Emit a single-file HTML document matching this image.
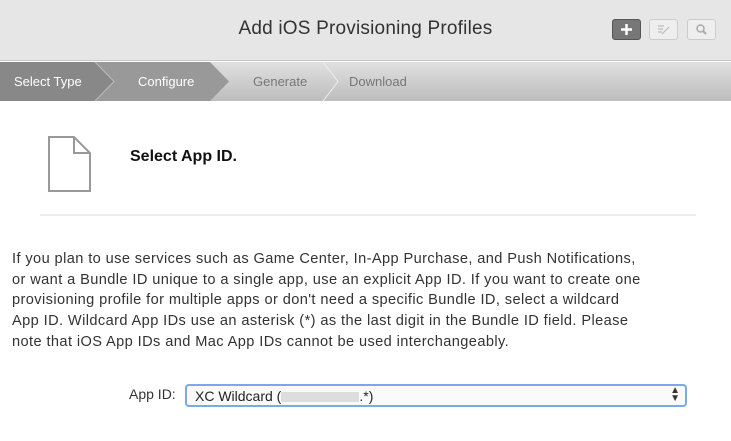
<!DOCTYPE html>
<html><head><style>
body{margin:0;width:731px;height:441px;overflow:hidden;background:#fff;font-family:"Liberation Sans",sans-serif;position:relative}
.hdr{position:absolute;left:0;top:0;width:731px;height:60px;background:#e6e6e6;border-bottom:1px solid #c8c8c8}
.title{position:absolute;left:0;width:731px;top:18px;text-align:center;font-size:19px;color:#333;letter-spacing:0.2px}
.btn{position:absolute;top:19px;width:29px;height:21px;border:1px solid #ccc;border-radius:3px;background:#eee;box-sizing:border-box}
.crumb{position:absolute;left:0;top:62px;width:731px;height:39px;background:linear-gradient(#e0e0e0,#bdbdbd)}
.c{position:absolute;top:12px;font-size:13px}
</style></head><body>
<div class="hdr">
<div class="title">Add iOS Provisioning Profiles</div>
<div class="btn" style="left:612px;background:#777;border-color:#555"><svg width="27" height="19"><path d="M13.5 4v11M8 9.5h11" stroke="#fff" stroke-width="2.5"/></svg></div>
<div class="btn" style="left:649px"><svg width="27" height="19"><path d="M8 6h6M8 9h5M8 12h4M12 14l7-7" stroke="#bbb" stroke-width="1.2" fill="none"/></svg></div>
<div class="btn" style="left:687px"><svg width="27" height="19"><circle cx="12.5" cy="8.5" r="3.5" stroke="#aaa" stroke-width="1.5" fill="none"/><path d="M15 11l3 3" stroke="#aaa" stroke-width="2"/></svg></div>
</div>
<div class="crumb">
<svg width="731" height="39" style="position:absolute;left:0;top:0">
<polygon points="0,0 210,0 229,19.5 210,39 0,39" fill="#999"/>
<polygon points="0,0 95,0 114,19.5 95,39 0,39" fill="#888"/>
<polyline points="95,0 114,19.5 95,39" fill="none" stroke="#bbb"/>
<polyline points="323,0 338,19.5 323,39" fill="none" stroke="#eee"/>
</svg>
<div class="c" style="left:14px;color:#fff">Select Type</div>
<div class="c" style="left:138px;color:#fff">Configure</div>
<div class="c" style="left:253px;color:#777">Generate</div>
<div class="c" style="left:349px;color:#777">Download</div>
</div>
<svg width="50" height="60" style="position:absolute;left:48px;top:136px"><path d="M1 1H26L42 17V55H1Z M26 1V17H42" fill="#fff" stroke="#999" stroke-width="2"/></svg>
<div style="position:absolute;left:130px;top:148px;font-size:16px;font-weight:bold;color:#111">Select App ID.</div>
<div style="position:absolute;left:40px;top:214px;width:656px;height:2px;background:#eee"></div>
<div style="position:absolute;left:12px;top:249px;white-space:nowrap;font-size:14.6px;letter-spacing:0.4px;line-height:20.7px;color:#333">If you plan to use services such as Game Center, In-App Purchase, and Push Notifications,<br>or want a Bundle ID unique to a single app, use an explicit App ID. If you want to create one<br>provisioning profile for multiple apps or don't need a specific Bundle ID, select a wildcard<br>App ID. Wildcard App IDs use an asterisk (*) as the last digit in the Bundle ID field. Please<br>note that iOS App IDs and Mac App IDs cannot be used interchangeably.</div>
<div style="position:absolute;left:129px;top:386px;font-size:14px;color:#333">App ID:</div>
<div style="position:absolute;left:185px;top:384px;width:502px;height:23px;border:2px solid #7aa8e8;border-radius:4px;box-sizing:border-box;background:#fafafa;font-size:14px;color:#222;padding:2px 0 0 8px">XC Wildcard (<span style="display:inline-block;width:78px;height:10px;background:#ddd;vertical-align:middle"></span>.*)<span style="position:absolute;right:5px;top:1px;font-size:10px;line-height:8px;color:#333">▲<br>▼</span></div>
</body></html>
